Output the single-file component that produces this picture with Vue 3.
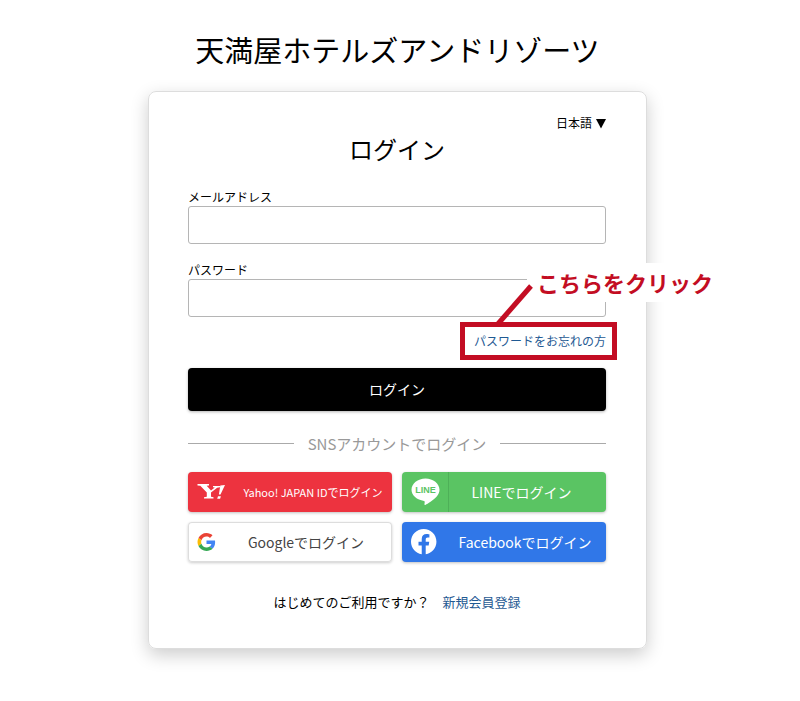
<script setup>
import { ref } from 'vue'

const email = ref('')
const password = ref('')
const lang = ref('ja')
</script>

<template>
  <main class="page">
    <h1 class="site-name">天満屋ホテルズアンドリゾーツ</h1>

    <section class="card">
      <div class="lang">
        <select v-model="lang" aria-label="言語">
          <option value="ja">日本語</option>
        </select>
        <svg class="caret" viewBox="0 0 10 10" aria-hidden="true">
          <path d="M0 0h10L5 9.500z" />
        </svg>
      </div>

      <h2 class="heading">ログイン</h2>

      <form @submit.prevent>
        <div class="field">
          <label for="email">メールアドレス</label>
          <input id="email" v-model="email" type="email" />
        </div>
        <div class="field">
          <label for="password">パスワード</label>
          <input id="password" v-model="password" type="password" />
        </div>

        <div class="forgot">
          <a href="#">パスワードをお忘れの方</a>
          <div class="frame"></div>
          <div class="callout">こちらをクリック</div>
          <svg class="pointer" viewBox="0 0 40 44" aria-hidden="true">
            <path d="M36 3L2 42" />
          </svg>
        </div>

        <button class="submit" type="submit">ログイン</button>
      </form>

      <div class="divider"><span>SNSアカウントでログイン</span></div>

      <div class="sns">
        <button type="button" class="yahoo">
          <svg viewBox="0 0 46 40" aria-hidden="true">
            <path d="M9.500 12H21v1.500l-2.300.3 4.300 4.700 3.800-3-1.800-.3V14H32v1.200l-2.800.5-6.200 4.800v4.300l2.500.4v1.300h-9.500v-1.300l2.800-.4v-4.300L12.300 13.800l-2.800-.3z" />
            <path d="M32.300 13.500l4.700-.5-4.500 9.500h-1.600zM30 24.200h2.900l-.8 2.500h-2.900z" />
          </svg>
          <span>Yahoo! JAPAN IDでログイン</span>
        </button>

        <button type="button" class="line">
          <svg viewBox="0 0 46 40" aria-hidden="true">
            <path d="M23.500 6.500c7.700 0 14 5 14 11.300 0 2.500-1 4.800-3 7-2.900 3.300-9.300 7.300-10.800 8-1.500.600-1.300-.400-1.200-1l.2-1.600c0-.500.100-1.100-.700-1.300-7.100-.9-12.500-5.500-12.500-11.100 0-6.300 6.300-11.300 14-11.300z" />
            <text x="23.500" y="21">LINE</text>
          </svg>
          <span>LINEでログイン</span>
        </button>

        <button type="button" class="google">
          <svg viewBox="0 0 46 40" aria-hidden="true">
            <g transform="translate(9.500 11) scale(.375)">
              <path fill="#ea4335" d="M24 9.500c3.540 0 6.710 1.220 9.210 3.600l6.850-6.850C35.900 2.380 30.470 0 24 0 14.620 0 6.510 5.380 2.560 13.220l7.980 6.190C12.430 13.720 17.740 9.500 24 9.500z" />
              <path fill="#4285f4" d="M46.980 24.550c0-1.570-.15-3.090-.38-4.550H24v9.020h12.940c-.58 2.960-2.260 5.480-4.780 7.180l7.730 6c4.510-4.180 7.090-10.360 7.090-17.650z" />
              <path fill="#fbbc05" d="M10.530 28.590c-.48-1.450-.76-2.990-.76-4.590s.27-3.140.76-4.590l-7.980-6.190C.92 16.460 0 20.120 0 24c0 3.880.92 7.540 2.560 10.780l7.970-6.190z" />
              <path fill="#34a853" d="M24 48c6.480 0 11.930-2.130 15.890-5.810l-7.730-6c-2.150 1.450-4.920 2.300-8.160 2.300-6.260 0-11.570-4.220-13.470-9.910l-7.980 6.190C6.510 42.620 14.620 48 24 48z" />
            </g>
          </svg>
          <span>Googleでログイン</span>
        </button>

        <button type="button" class="facebook">
          <svg viewBox="0 0 46 40" aria-hidden="true">
            <g transform="translate(9 7) scale(1.060)">
              <path d="M24 12.073c0-6.627-5.373-12-12-12s-12 5.373-12 12c0 5.990 4.388 10.954 10.125 11.854v-8.385H7.078v-3.470h3.047V9.430c0-3.007 1.792-4.669 4.533-4.669 1.312 0 2.686.235 2.686.235v2.953H15.830c-1.491 0-1.956.925-1.956 1.874v2.250h3.328l-.532 3.470h-2.796v8.385C19.612 23.027 24 18.062 24 12.073z" />
            </g>
          </svg>
          <span>Facebookでログイン</span>
        </button>
      </div>

      <p class="signup">はじめてのご利用ですか？<a href="#">新規会員登録</a></p>
    </section>
  </main>
</template>

<style>
body {
  margin: 0;
  background: #fff;
}
</style>

<style scoped>
.page {
  box-sizing: border-box;
  padding: 29px 5px 52px 0;
  font-family: "Noto Sans CJK JP", sans-serif;
  color: #000;
  overflow: hidden;
}

.site-name {
  margin: 0 0 21px;
  font-size: 29px;
  line-height: 41px;
  font-weight: 400;
  text-align: center;
}

.card {
  box-sizing: border-box;
  width: 100%;
  max-width: 499px;
  margin: 0 auto;
  padding: 20px 40px 36px 39px;
  border: 1px solid #ddd;
  border-radius: 8px;
  box-shadow: 0 6px 18px rgba(0, 0, 0, 0.2);
}

.lang {
  display: flex;
  justify-content: flex-end;
  align-items: center;
  gap: 3px;
  height: 20px;
}

.lang select {
  appearance: none;
  padding: 0;
  border: 0;
  background: none;
  font: inherit;
  font-size: 12px;
  color: #000;
}

.caret {
  width: 10px;
  height: 10px;
  margin-top: 4px;
}

.heading {
  margin: 0 0 22px;
  font-size: 24px;
  line-height: 34px;
  font-weight: 400;
  text-align: center;
}

.field {
  margin-bottom: 17px;
}

.field label {
  display: block;
  font-size: 12px;
  line-height: 18px;
}

.field input {
  display: block;
  box-sizing: border-box;
  width: 100%;
  height: 38px;
  padding: 0 10px;
  border: 1px solid #b5b5b5;
  border-radius: 3px;
  font: inherit;
  font-size: 14px;
}

.forgot {
  position: relative;
  margin: -2px 0 18px;
  font-size: 12px;
  line-height: 18px;
  text-align: right;
}

a {
  color: #1f5a93;
  text-decoration: none;
}

.frame {
  position: absolute;
  top: -10px;
  right: -11px;
  box-sizing: border-box;
  width: 157px;
  height: 38px;
  border: 5px solid #c30d23;
  pointer-events: none;
}

.callout {
  position: absolute;
  top: -69px;
  right: -124px;
  padding: 0 17px 0 10px;
  background: #fff;
  color: #c30d23;
  font-size: 22px;
  line-height: 39px;
  font-weight: 700;
  white-space: nowrap;
}

.pointer {
  position: absolute;
  top: -49px;
  right: 71px;
  width: 40px;
  height: 44px;
  fill: none;
  stroke: #c30d23;
  stroke-width: 5;
}

button {
  font-family: inherit;
  cursor: pointer;
}

.submit {
  display: block;
  width: 100%;
  height: 43px;
  padding: 0 0 2px;
  border: 0;
  border-radius: 4px;
  background: #000;
  color: #fff;
  font-size: 14px;
  box-shadow: 0 1px 3px rgba(0, 0, 0, 0.3);
}

.divider {
  display: flex;
  align-items: center;
  gap: 14px;
  margin: 20px 0 16px;
  color: #999;
  font-size: 15px;
  line-height: 25px;
}

.divider::before,
.divider::after {
  content: "";
  flex: 1;
  height: 1px;
  background: #aaa;
}

.sns {
  display: grid;
  grid-template-columns: 1fr 1fr;
  gap: 10px;
}

.sns button {
  display: flex;
  align-items: center;
  height: 40px;
  padding: 0;
  border: 0;
  border-radius: 4px;
  color: #fff;
  font-size: 14px;
  box-shadow: 0 1px 3px rgba(0, 0, 0, 0.25);
}

.sns svg {
  flex: none;
  width: 46px;
  height: 40px;
  fill: #fff;
}

.sns span {
  flex: 1;
  text-align: center;
  white-space: nowrap;
}

.sns .yahoo {
  background: #ed333f;
  font-size: 11px;
}

.sns .line {
  padding-right: 12px;
  background: #5ac463;
}

.line svg {
  border-right: 1px solid #4eb058;
}

.line text {
  fill: #5ac463;
  font: 700 9px "Liberation Sans", sans-serif;
  text-anchor: middle;
}

.sns .google {
  padding-right: 14px;
  background: #fff;
  color: #444;
  box-shadow: inset 0 0 0 1px #ddd, 0 1px 3px rgba(0, 0, 0, 0.2);
}

.sns .facebook {
  padding-right: 4px;
  background: #3077e8;
}

.signup {
  margin: 30px 0 0;
  font-size: 13px;
  line-height: 20px;
  text-align: center;
}

.signup a {
  margin-left: 13px;
}
</style>
